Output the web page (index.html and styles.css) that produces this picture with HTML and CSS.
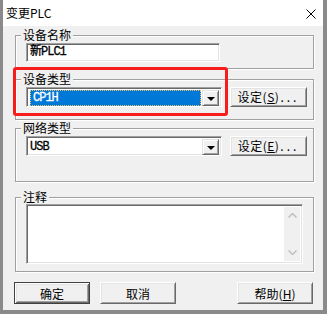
FILE: index.html
```html
<!DOCTYPE html>
<html lang = 'zh-CN'>
	<head>
		<meta charset = 'utf-8'>
		<title>变更PLC</title>
		<link rel = 'stylesheet' href = 'styles.css'>
	</head>
	<body>
		<div class = 'dialog'>
			<div class = 'dialog-title'>
				<span class = 'dialog-caption'>变更PLC</span>
				<svg class = 'dialog-close' width = 10 height = 10 viewBox = '0 0 10 10'>
					<line x1 = '0.5' y1 = '0.5' x2 = '9.5' y2 = '9.5'></line>
					<line x1 = '9.5' y1 = '0.5' x2 = '0.5' y2 = '9.5'></line>
				</svg>
			</div>

			<fieldset class = 'group group-name'>
				<legend class = 'group-label'>设备名称</legend>
				<div class = 'edit'>新PLC1</div>
			</fieldset>

			<fieldset class = 'group group-type'>
				<legend class = 'group-label'>设备类型</legend>
				<div class = 'group-row'>
					<div class = 'combo'>
						<div class = 'combo-text'><span class = 'combo-selected'>CP1H</span></div>
						<div class = 'combo-button'><span class = 'combo-arrow'></span></div>
					</div>
					<button class = 'btn btn-setting'>设定(<u>S</u>)<span class = 'btn-dots'>...</span></button>
				</div>
			</fieldset>

			<fieldset class = 'group group-net'>
				<legend class = 'group-label'>网络类型</legend>
				<div class = 'group-row'>
					<div class = 'combo'>
						<div class = 'combo-text'>USB</div>
						<div class = 'combo-button'><span class = 'combo-arrow'></span></div>
					</div>
					<button class = 'btn btn-setting'>设定(<u>E</u>)<span class = 'btn-dots'>...</span></button>
				</div>
			</fieldset>

			<fieldset class = 'group group-note'>
				<legend class = 'group-label'>注释</legend>
				<div class = 'memo'>
					<div class = 'memo-body'></div>
					<div class = 'memo-scroll'>
						<svg width = 9 height = 5 viewBox = '0 0 9 5'><polyline points = '0.5,4.5 4.5,0.5 8.5,4.5'></polyline></svg>
						<svg width = 9 height = 5 viewBox = '0 0 9 5'><polyline points = '0.5,0.5 4.5,4.5 8.5,0.5'></polyline></svg>
					</div>
				</div>
			</fieldset>

			<div class = 'dialog-buttons'>
				<button class = 'btn btn-default'>确定</button>
				<button class = 'btn'>取消</button>
				<button class = 'btn btn-help'>帮助(<u>H</u>)</button>
			</div>

			<!-- annotation drawn over the dialog -->
			<div class = 'highlight'></div>
		</div>
	</body>
</html>
```

FILE: styles.css
```css
html, body {
	margin: 0;
	padding: 0;
	background: #f0f0f0;
}
.dialog {
	position: relative;
	width: 327px;
	height: 314px;
	box-sizing: border-box;
	overflow: hidden;
	background: #f0f0f0;
	border-left: 3px solid #8a8a8a;
	border-right: 4px solid #8a8a8a;
	border-bottom: 4px solid #8a8a8a;
	font-family: 'Noto Sans CJK SC', 'Liberation Sans', sans-serif;
	font-size: 12px;
	color: #000;
}
.dialog-title {
	height: 26px;
	background: #fff;
	display: flex;
	align-items: center;
	justify-content: space-between;
	padding: 0 10px 0 3px;
	margin-left: -3px;
	margin-right: -4px;
	border-left: 1px solid #8a8a8a;
	border-right: 1px solid #8a8a8a;
}
.dialog-caption {
	line-height: 14px;
	padding-left: 2px;
}
.dialog-close {
	fill: none;
	stroke: #000;
	stroke-width: 1;
	margin-top: 1px;
}

/* group boxes */
.group {
	margin: 0 9px 0 12px;
	padding: 1px 6px 6px 10px;
	min-width: 0;
	border: 1px solid #a0a0a0;
	box-shadow: 1px 1px 0 #fff, inset 1px 1px 0 #fff;
}
.group-label {
	font-size: 12px;
	line-height: 14px;
	padding: 0 2px;
	margin-left: -5px;
	background: #f0f0f0;
}
.group-name {
	margin-top: 2px;
}
.group-type {
	margin-top: 3px;
	padding-bottom: 12px;
}
.group-net {
	margin-top: 1px;
	padding-bottom: 25px;
}
.group-note {
	margin-top: 8px;
	padding: 0 10px 7px 10px;
}
.group-row {
	display: flex;
	align-items: flex-start;
	gap: 8px;
}

/* sunken controls */
.edit, .combo, .memo {
	box-sizing: border-box;
	background: #fff;
	border-top: 1px solid #a0a0a0;
	border-left: 1px solid #a0a0a0;
	border-right: 1px solid #fff;
	border-bottom: 1px solid #fff;
	box-shadow: inset 1px 1px 0 #696969, inset -1px -1px 0 #e3e3e3;
}
.edit {
	width: 194px;
	height: 19px;
	padding: 0 3px;
	font: 12px/17px 'Liberation Mono', 'Noto Sans CJK SC', monospace;
	letter-spacing: -1px;
	-webkit-text-stroke: 0.3px #000;
}
.combo {
	width: 196px;
	height: 20px;
	display: flex;
	padding: 2px;
}
.combo-text {
	flex: 1;
	font: 12px/16px 'Liberation Mono', 'Noto Sans CJK SC', monospace;
	letter-spacing: -1px;
	padding-left: 1px;
	-webkit-text-stroke: 0.3px #000;
}
.combo-selected {
	display: block;
	height: 16px;
	box-sizing: border-box;
	margin-right: 1px;
	padding-left: 2px;
	background: #0078d7;
	color: #fff;
	-webkit-text-stroke: 0.3px #fff;
	border: 1px dotted #e8c070;
	line-height: 14px;
}
.combo-button {
	width: 17px;
	height: 16px;
	box-sizing: border-box;
	background: #f0f0f0;
	border-top: 1px solid #e3e3e3;
	border-left: 1px solid #e3e3e3;
	border-right: 1px solid #696969;
	border-bottom: 1px solid #696969;
	box-shadow: inset 1px 1px 0 #fff, inset -1px -1px 0 #a0a0a0;
	display: flex;
	align-items: center;
	justify-content: center;
}
.combo-arrow {
	width: 0;
	height: 0;
	border-left: 4px solid transparent;
	border-right: 4px solid transparent;
	border-top: 4px solid #000;
	margin-top: 1px;
}

/* memo box */
.memo {
	width: 277px;
	height: 60px;
	display: flex;
	padding: 2px;
}
.memo-body {
	flex: 1;
}
.memo-scroll {
	width: 16px;
	background: #f0f0f0;
	display: flex;
	flex-direction: column;
	justify-content: space-between;
	align-items: center;
	padding: 6px 0;
}
.memo-scroll svg {
	fill: none;
	stroke: #bfbfbf;
	stroke-width: 1.5;
}

/* buttons */
.btn {
	box-sizing: border-box;
	width: 76px;
	height: 22px;
	padding: 0;
	margin: 0;
	font-family: 'Noto Sans CJK SC', 'Liberation Sans', sans-serif;
	font-size: 12px;
	color: #000;
	background: #f0f0f0;
	border-top: 1px solid #fff;
	border-left: 1px solid #fff;
	border-right: 1px solid #696969;
	border-bottom: 1px solid #696969;
	box-shadow: inset 1px 1px 0 #e3e3e3, inset -1px -1px 0 #a0a0a0;
	cursor: default;
}
.btn u {
	text-underline-offset: 1px;
}
.btn-setting {
	width: 77px;
	height: 20px;
	line-height: 16px;
	letter-spacing: 0.5px;
}
.btn-dots {
	letter-spacing: 3px;
	margin-left: 1px;
}
.btn-default {
	border: 1px solid #404040;
	box-shadow: inset 1px 1px 0 #fff, inset -1px -1px 0 #696969, inset 2px 2px 0 #e3e3e3, inset -2px -2px 0 #a0a0a0;
}
.dialog-buttons {
	display: flex;
	gap: 10px;
	margin: 10px 10px 0 11px;
}
.btn-help {
	margin-left: auto;
}

/* red annotation frame */
.highlight {
	position: absolute;
	left: 10px;
	top: 67px;
	width: 215px;
	height: 49px;
	box-sizing: border-box;
	border: 3px solid #f81d1d;
	border-radius: 3px;
}
```
